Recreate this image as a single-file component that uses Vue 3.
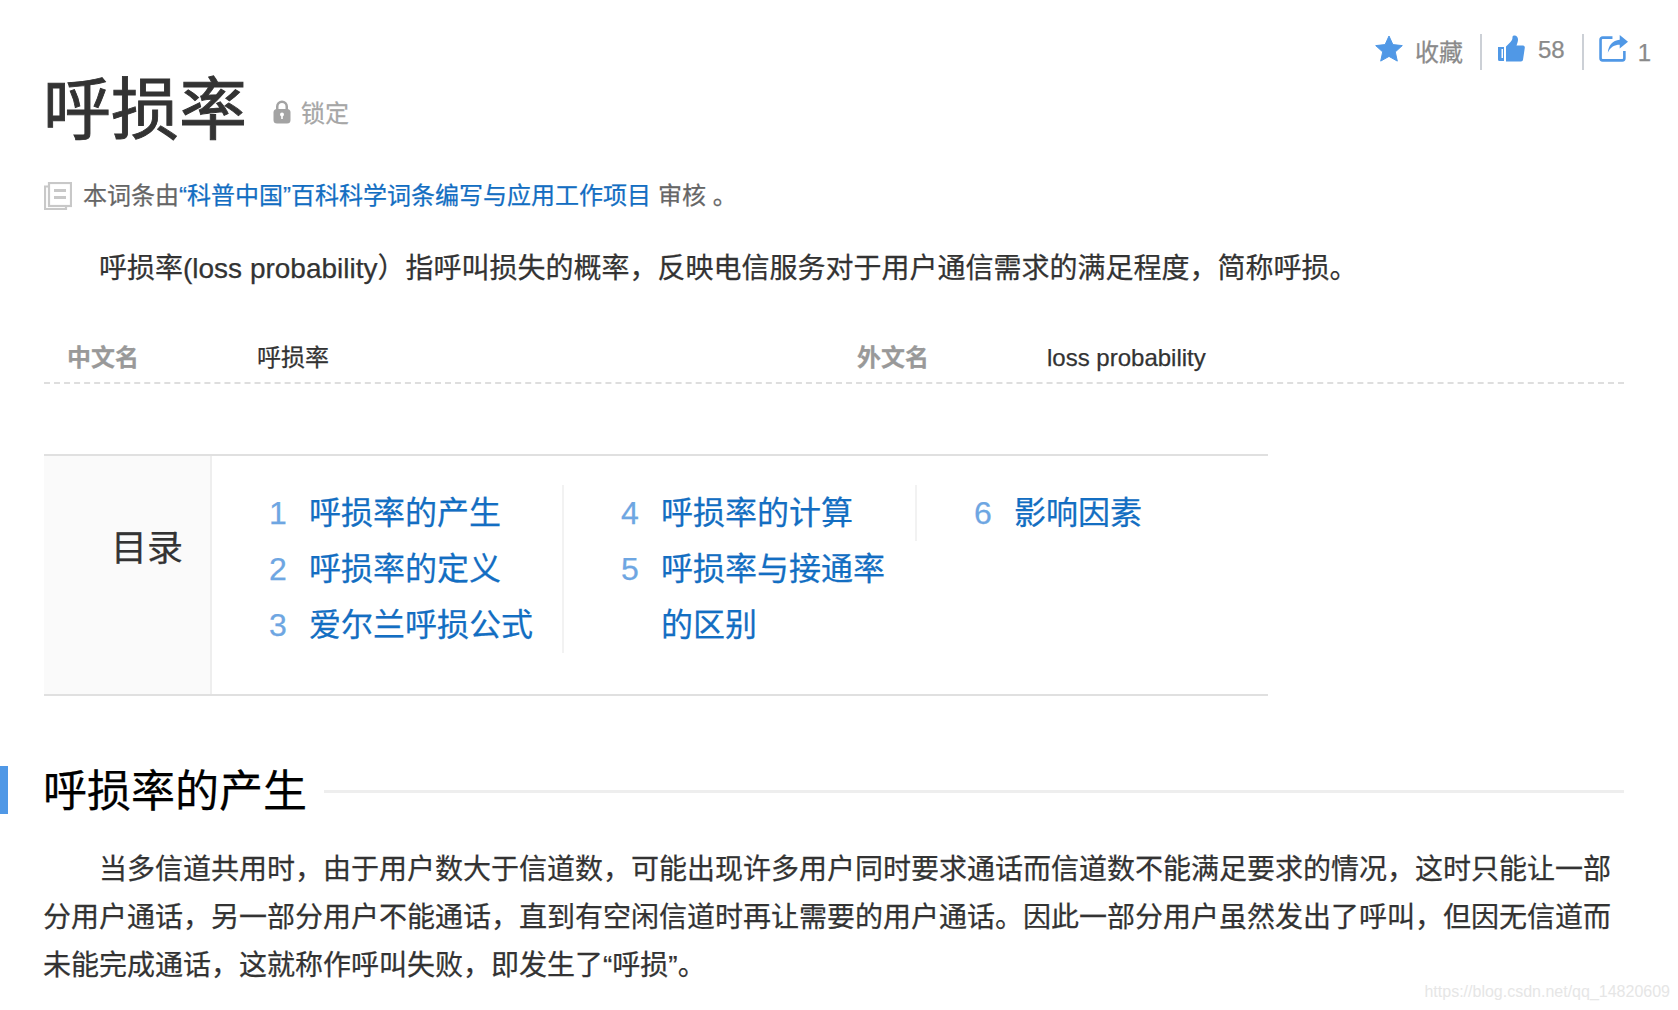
<script setup>
const tocCols = [
  [
    { n: '1', t: '呼损率的产生' },
    { n: '2', t: '呼损率的定义' },
    { n: '3', t: '爱尔兰呼损公式' }
  ],
  [
    { n: '4', t: '呼损率的计算' },
    { n: '5', t: '呼损率与接通率的区别' }
  ],
  [{ n: '6', t: '影响因素' }]
]
</script>

<template>
  <div class="page">
    <div class="actions">
      <div class="act">
        <svg class="ic-star" viewBox="0 0 28 28"><path d="M14 1l3.900 8.600 9.400 1-7 6.300 2 9.200L14 21.400 5.700 26.100l2-9.200-7-6.300 9.400-1z" fill="#5098e6" stroke="#5098e6" stroke-linejoin="round"/></svg>
        <span class="act-text">收藏</span>
      </div>
      <div class="act">
        <svg class="ic-thumb" viewBox="0 0 28 28"><path d="M1 12h6v14H2.500A1.500 1.500 0 0 1 1 24.500zM9 11.500l4.500-4.500c1.500-1.500 2-3 2-5 0-1 .8-1.500 2-1.500 2.200 0 3.500 2 3.500 4 0 2-.8 4-1.500 6H26c1.200 0 2 1 1.800 2.300l-1.800 12c-.2 1-1 1.700-2 1.700H9z" fill="#5098e6"/><rect x="4.500" y="14" width="1.500" height="9" fill="#fff"/></svg>
        <span class="act-text">58</span>
      </div>
      <div class="act last">
        <svg class="ic-share" viewBox="0 0 28 28"><path d="M13 3.500H3.500a2 2 0 0 0-2 2v18a2 2 0 0 0 2 2h19a2 2 0 0 0 2-2v-7" fill="none" stroke="#5098e6" stroke-width="2.500"/><path d="M20 1l8 6.500-8 6.500V10.300c-5 0-9 2.200-11.500 7.700 .6-7 4.500-12 11.500-12.500z" fill="#5098e6"/></svg>
        <span class="act-text one">1</span>
      </div>
    </div>

    <div class="title-row">
      <h1 class="title">呼损率</h1>
      <svg class="ic-lock" viewBox="0 0 18 24"><path d="M3 10V6.500a6 6 0 0 1 12 0V10h-2.500V6.500a3.500 3.500 0 0 0-7 0V10z" fill="#a3a3a3"/><rect x="0.500" y="9" width="17" height="14.500" rx="3.500" fill="#a3a3a3"/><circle cx="9" cy="14.500" r="2" fill="#fff"/><rect x="8.200" y="15" width="1.600" height="4" fill="#fff"/></svg>
      <span class="lock-text">锁定</span>
    </div>

    <div class="audit">
      <svg class="ic-doc" viewBox="0 0 28 28"><path d="M4 4.500H1v22.500h21v-3" fill="none" stroke="#c8c8c8" stroke-width="2.200"/><rect x="5" y="1" width="22" height="23" fill="#fff" stroke="#c8c8c8" stroke-width="2.200"/><rect x="10" y="7" width="12" height="3" fill="#c8c8c8"/><rect x="10" y="14" width="12" height="3" fill="#c8c8c8"/></svg>
      <div class="audit-text"><span>本词条由</span><a class="audit-link">“科普中国”百科科学词条编写与应用工作项目</a><span class="audit-tail">审核 。</span></div>
    </div>

    <p class="para summary">呼损率(loss probability）指呼叫损失的概率，反映电信服务对于用户通信需求的满足程度，简称呼损。</p>

    <div class="facts">
      <div class="fact">
        <span class="fact-k">中文名</span>
        <span class="fact-v">呼损率</span>
      </div>
      <div class="fact">
        <span class="fact-k">外文名</span>
        <span class="fact-v">loss probability</span>
      </div>
    </div>

    <div class="toc">
      <div class="toc-head">目录</div>
      <div class="toc-body">
        <ul v-for="(col, i) in tocCols" :key="i" class="toc-col">
          <li v-for="item in col" :key="item.n" class="toc-item">
            <span class="toc-num">{{ item.n }}</span>
            <span class="toc-text">{{ item.t }}</span>
          </li>
        </ul>
      </div>
    </div>

    <div class="section">
      <h2 class="section-title">呼损率的产生</h2>
      <div class="section-rule"></div>
    </div>

    <p class="para body">当多信道共用时，由于用户数大于信道数，可能出现许多用户同时要求通话而信道数不能满足要求的情况，这时只能让一部分用户通话，另一部分用户不能通话，直到有空闲信道时再让需要的用户通话。因此一部分用户虽然发出了呼叫，但因无信道而未能完成通话，这就称作呼叫失败，即发生了“呼损”。</p>

    <div class="watermark">https://blog.csdn.net/qq_14820609</div>
  </div>
</template>

<style>
html, body { margin: 0; background: #fff; }
</style>

<style scoped>
.page {
  position: relative;
  width: 1678px;
  height: 1010px;
  overflow: hidden;
  box-sizing: border-box;
  padding: 0 54px 0 44px;
  background: #fff;
  color: #333;
  font-family: "Liberation Sans", "Noto Sans CJK SC", sans-serif;
  -webkit-text-stroke: 0.25px;
}
.actions {
  position: absolute;
  top: 34px;
  right: 27px;
  display: flex;
  align-items: center;
  color: #8a8a8a;
  font-size: 24px;
}
.act {
  display: flex;
  align-items: center;
  height: 36px;
  padding: 0 16px;
  border-right: 2px solid #ccd0d6;
}
.act:nth-child(1) { padding-right: 17px; }
.act:nth-child(2) { padding-left: 15px; padding-right: 17px; }
.act.last { border-right: 0; padding-right: 0; }
.ic-star { width: 28px; height: 28px; margin: 0 12px 6px 0; }
.ic-thumb { width: 28px; height: 28px; margin: 0 13px 6px 0; }
.ic-share { width: 29px; height: 29px; margin: 0 10px 8px -1px; }
.act-text { margin-bottom: 4px; }
.act-text.one { margin: 2px 0 0; }
.title-row {
  display: flex;
  align-items: center;
  height: 100px;
  padding-top: 60px;
}
.title {
  margin: 0 0 0 -1px;
  font-size: 68px;
  line-height: 100px;
  font-weight: 400;
  color: #333;
  -webkit-text-stroke: 0.9px;
}
.ic-lock { width: 18px; height: 24px; margin: 4px 0 0 26px; }
.lock-text {
  margin: 2px 0 0 10px;
  font-size: 24px;
  color: #a6a6a6;
}
.audit {
  display: flex;
  align-items: center;
  height: 36px;
  margin-top: 18px;
  font-size: 24px;
  color: #666;
}
.audit-text { margin-bottom: 6px; }
.ic-doc { width: 28px; height: 28px; margin-right: 11px; flex: none; }
.audit-link { color: #136ec2; }
.audit-tail { margin-left: 7px; }
.para {
  margin: 0 0 0 -1px;
  font-size: 28px;
  line-height: 48px;
  color: #333;
  text-indent: 2em;
}
.summary { margin-top: 31px; }
.facts {
  display: flex;
  height: 56px;
  margin-top: 33px;
  border-bottom: 2px dashed #dedede;
  font-size: 24px;
  line-height: 64px;
}
.fact { display: flex; width: 790px; padding-left: 23px; box-sizing: border-box; }
.fact-k { width: 190px; color: #999; font-weight: 700; }
.fact-v { color: #333; }
.toc {
  display: flex;
  width: 1224px;
  height: 242px;
  margin-top: 70px;
  box-sizing: border-box;
  border-top: 2px solid #e0e0e0;
  border-bottom: 2px solid #e0e0e0;
}
.toc-head {
  flex: none;
  width: 168px;
  box-sizing: border-box;
  padding: 65px 27px 0 0;
  background: #fafafa;
  border-right: 2px solid #eee;
  text-align: right;
  font-size: 36px;
  line-height: 56px;
  color: #333;
}
.toc-body {
  display: flex;
  flex: 1;
  min-width: 0;
  align-items: flex-start;
  padding: 29px 0 0 0;
}
.toc-col {
  flex: none;
  list-style: none;
  margin: 0;
  padding: 0 28px 0 57px;
  width: 353px;
  box-sizing: border-box;
  border-left: 2px solid #f2f2f2;
}
.toc-col:first-child { width: 350px; border-left: 0; }
.toc-col:last-child { flex: 1; padding-right: 0; }
.toc-item {
  display: flex;
  font-size: 32px;
  line-height: 56px;
}
.toc-num {
  flex: none;
  width: 40px;
  color: #6ea6e2;
  font-size: 32px;
}
.toc-text { color: #136ec2; }
.section {
  display: flex;
  align-items: center;
  position: relative;
  height: 48px;
  margin-top: 70px;
}
.section::before {
  content: "";
  position: absolute;
  left: -44px;
  top: 0;
  width: 8px;
  height: 48px;
  background: #5098e6;
}
.section-title {
  margin: 4px 0 0 -1px;
  font-size: 44px;
  line-height: 48px;
  font-weight: 400;
  color: #000;
}
.section-rule {
  flex: 1;
  height: 3px;
  margin-left: 17px;
  margin-top: 3px;
  background: #eee;
}
.body { margin-top: 32px; margin-right: 8px; }
.watermark {
  position: absolute;
  right: 8px;
  bottom: 9px;
  font-size: 16px;
  color: #e6e6e6;
  -webkit-text-stroke: 0;
}
</style>
